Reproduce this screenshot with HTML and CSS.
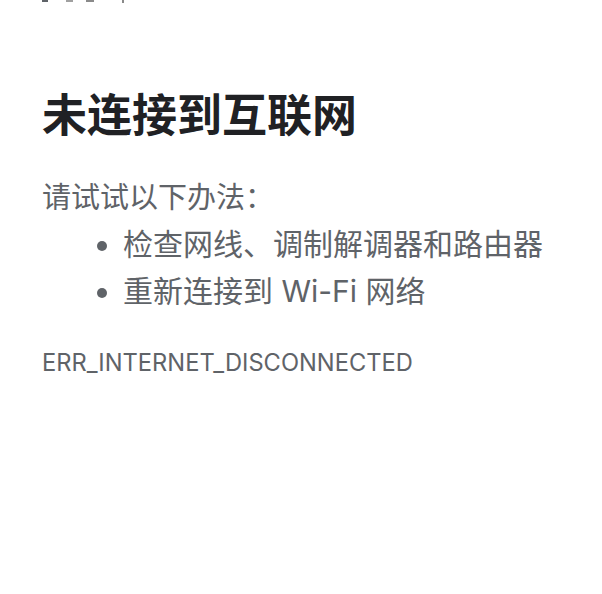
FILE: index.html
```html
<!DOCTYPE html>
<html lang="zh-CN">
<head>
<meta charset="utf-8">
<link rel="stylesheet" href="styles.css">
</head>
<body>
<div class="page">
  <div class="icon">
    <svg width="90" height="4" viewBox="0 0 90 4">
      <rect x="0" y="0" width="6" height="2" fill="#5f6368"/>
      <rect x="24" y="0" width="7" height="2" fill="#a0a0a0"/>
      <rect x="44" y="0" width="8" height="2" fill="#8a8a8a"/>
      <rect x="80" y="0" width="2" height="3" fill="#8a8a8a"/>
    </svg>
  </div>
  <h1 class="title">未连接到互联网</h1>
  <p class="intro">请试试以下办法：</p>
  <ul class="tips">
    <li>检查网线、调制解调器和路由器</li>
    <li>重新连接到 Wi-Fi 网络</li>
  </ul>
  <div class="code">ERR_INTERNET_DISCONNECTED</div>
</div>
</body>
</html>
```
FILE: styles.css
```css
html, body {
  margin: 0;
  padding: 0;
  background: #ffffff;
}
body {
  font-family: "Inter", "Noto Sans CJK SC", sans-serif;
  color: #5f6368;
}
.page {
  padding: 0 0 0 42px;
}
.icon {
  height: 4px;
  line-height: 0;
}
.icon svg {
  display: block;
}
.title {
  margin: 84px 0 0 0;
  font-size: 45px;
  font-weight: 600;
  line-height: 56px;
  color: #202124;
}
.intro {
  margin: 31px 0 0 0;
  font-size: 29px;
  line-height: 46px;
}
.tips {
  margin: 0;
  padding-left: 81px;
  font-size: 30px;
  line-height: 47px;
}
.code {
  margin-top: 33px;
  font-size: 23.7px;
  line-height: 30px;
}
```
